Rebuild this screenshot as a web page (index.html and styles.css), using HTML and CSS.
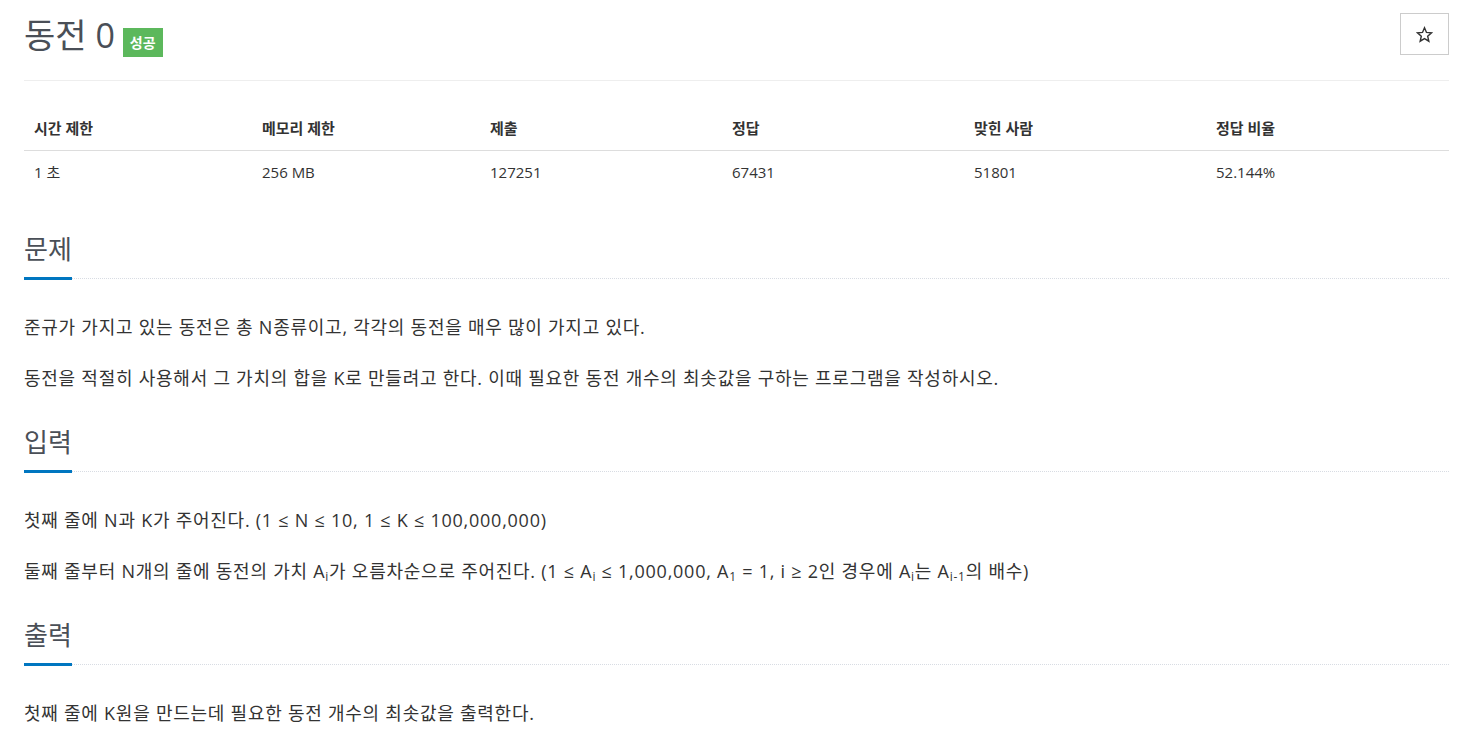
FILE: index.html
```html
<!DOCTYPE html>
<html lang="ko">
<head>
<meta charset="utf-8">
<link rel="stylesheet" href="styles.css">
</head>
<body>
<div class="page">
  <div class="title-bar">
    <div class="title">
      <span class="title-text">동전 0</span>
      <span class="badge">성공</span>
    </div>
    <button class="star-btn" aria-label="즐겨찾기">
      <svg width="17" height="17" viewBox="0 0 24 24"><path d="M12 2.5l2.8 6.6 7.1.6-5.4 4.7 1.6 7-6.1-3.7-6.1 3.7 1.6-7L2.1 9.7l7.1-.6z" fill="none" stroke="#333" stroke-width="2" stroke-linejoin="miter"/></svg>
    </button>
  </div>
  <table class="info">
    <thead>
      <tr><th class="c1">시간 제한</th><th class="c2">메모리 제한</th><th class="c3">제출</th><th class="c4">정답</th><th class="c5">맞힌 사람</th><th>정답 비율</th></tr>
    </thead>
    <tbody>
      <tr><td>1 초</td><td>256 MB</td><td>127251</td><td>67431</td><td>51801</td><td>52.144%</td></tr>
    </tbody>
  </table>

  <section class="sec first">
    <div class="headline"><h2>문제</h2></div>
    <div class="body">
      <p>준규가 가지고 있는 동전은 총 N종류이고, 각각의 동전을 매우 많이 가지고 있다.</p>
      <p>동전을 적절히 사용해서 그 가치의 합을 K로 만들려고 한다. 이때 필요한 동전 개수의 최솟값을 구하는 프로그램을 작성하시오.</p>
    </div>
  </section>

  <section class="sec">
    <div class="headline"><h2>입력</h2></div>
    <div class="body">
      <p>첫째 줄에 N과 K가 주어진다. (1 ≤ N ≤ 10, 1 ≤ K ≤ 100,000,000)</p>
      <p>둘째 줄부터 N개의 줄에 동전의 가치 A<sub>i</sub>가 오름차순으로 주어진다. (1 ≤ A<sub>i</sub> ≤ 1,000,000, A<sub>1</sub> = 1, i ≥ 2인 경우에 A<sub>i</sub>는 A<sub>i-1</sub>의 배수)</p>
    </div>
  </section>

  <section class="sec">
    <div class="headline"><h2>출력</h2></div>
    <div class="body">
      <p>첫째 줄에 K원을 만드는데 필요한 동전 개수의 최솟값을 출력한다.</p>
    </div>
  </section>
</div>
</body>
</html>
```

FILE: styles.css
```css
* { box-sizing: border-box; }
html, body { margin: 0; padding: 0; background: #fff; }
body {
  font-family: "Open Sans", "Noto Sans CJK KR", sans-serif;
  color: #333;
  font-size: 15px;
}
.page {
  padding: 0 24px;
}
.title-bar {
  display: flex;
  justify-content: space-between;
  align-items: flex-start;
  padding-top: 13px;
  height: 81px;
  border-bottom: 1px solid #eee;
}
.title {
  display: flex;
  align-items: flex-start;
}
.title-text {
  font-size: 34px;
  line-height: 44px;
  color: #4a4f57;
  font-weight: 400;
}
.badge {
  display: inline-block;
  margin-left: 8px;
  margin-top: 15px;
  background: #5cb85c;
  color: #fff;
  font-size: 14px;
  font-weight: 700;
  line-height: 29px;
  height: 29px;
  padding: 0 7px;
}
.star-btn {
  width: 49px;
  height: 42px;
  border: 1px solid #ccc;
  background: #fff;
  padding: 0;
  display: flex;
  align-items: center;
  justify-content: center;
  border-radius: 0;
}
.info {
  width: 100%;
  border-collapse: collapse;
  margin-top: 24px;
}
.info th, .info td {
  text-align: left;
  padding: 0 10px;
  font-size: 15px;
}
.info th {
  font-weight: 700;
  height: 45px;
  border-bottom: 1px solid #ddd;
  vertical-align: middle;
}
.info td {
  height: 43px;
  vertical-align: middle;
}
.c1 { width: 228px; }
.c2 { width: 228px; }
.c3, .c4, .c5 { width: 242px; }

.sec.first { margin-top: 41px; }
.headline {
  border-bottom: 1px dotted #d8dce3;
  display: flex;
}
.headline h2 {
  margin: 0 0 -2px 0;
  font-size: 26px;
  font-weight: 400;
  color: #4a4f57;
  line-height: 30px;
  padding-bottom: 13px;
  border-bottom: 3px solid #0076c0;
}
.body {
  padding-top: 35px;
  padding-bottom: 35px;
}
.body p {
  margin: 0 0 24px 0;
  font-size: 18px;
  line-height: 27px;
  letter-spacing: 0.75px;
  color: #333;
}
.body p:last-child { margin-bottom: 0; }
sub {
  font-size: 12px;
  vertical-align: -3px;
  line-height: 0;
}
```
